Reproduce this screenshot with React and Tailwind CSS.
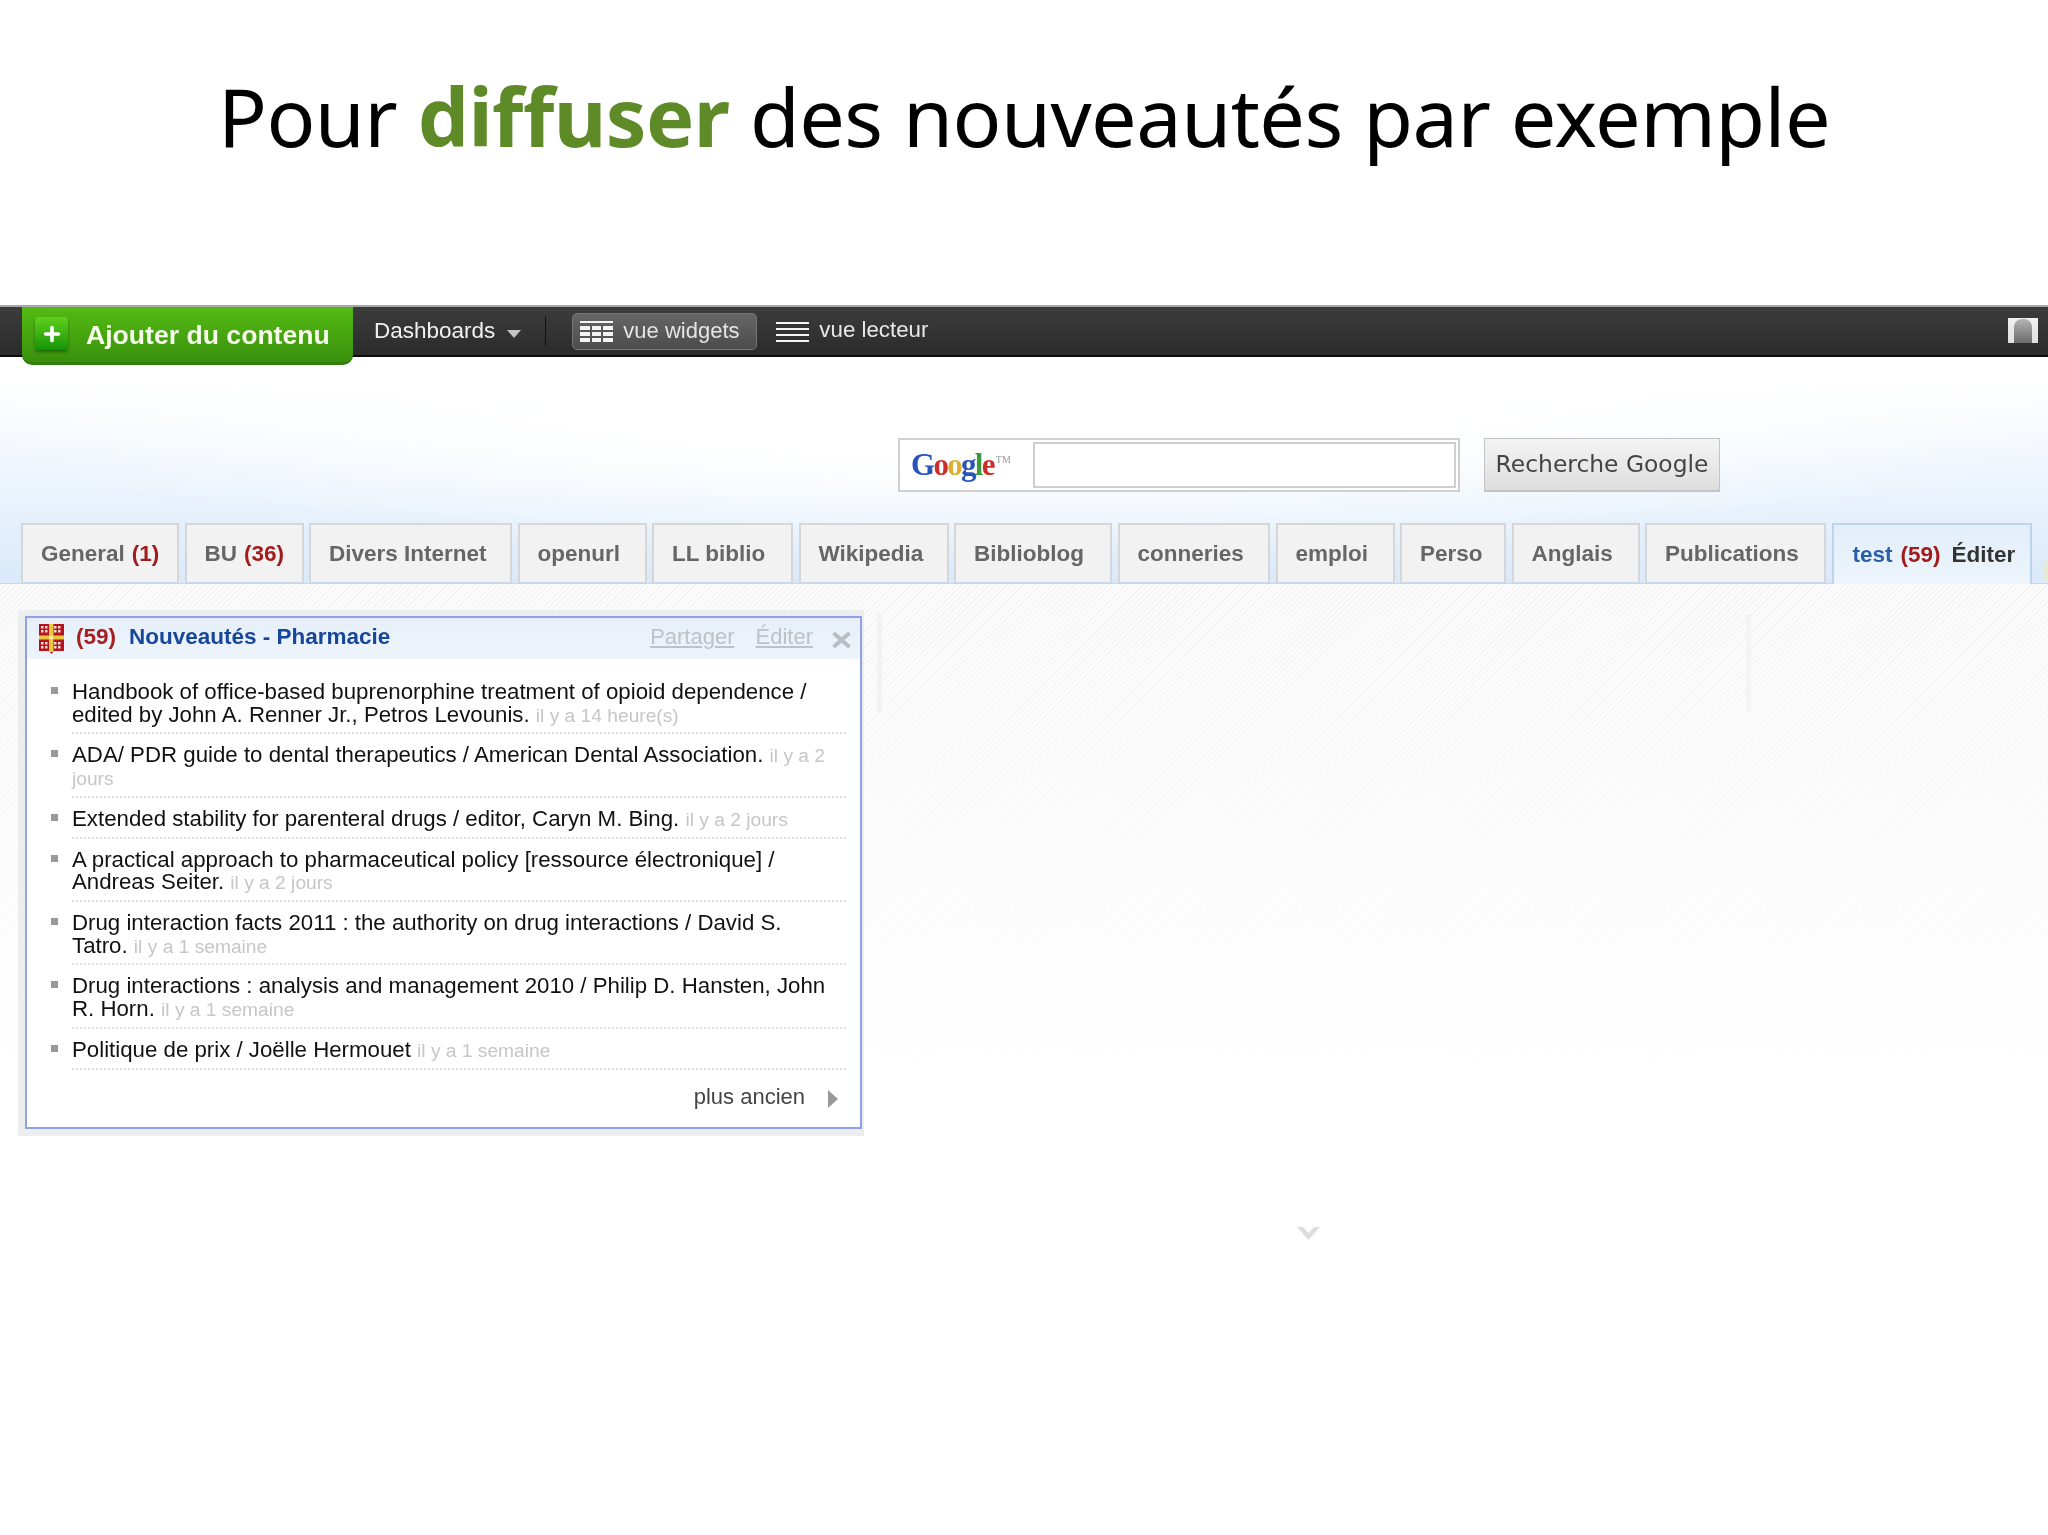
import { Plus } from 'lucide-react'

const sans = "font-['Liberation_Sans',Arial,sans-serif]"

const tabs = [
  { name: 'General', count: '(1)', w: 'w-[158px]' },
  { name: 'BU', count: '(36)', w: 'w-[119px]' },
  { name: 'Divers Internet', w: 'w-[203px]' },
  { name: 'openurl', w: 'w-[129px]' },
  { name: 'LL biblio', w: 'w-[141px]' },
  { name: 'Wikipedia', w: 'w-[150px]' },
  { name: 'Biblioblog', w: 'w-[158px]' },
  { name: 'conneries', w: 'w-[152.500px]' },
  { name: 'emploi', w: 'w-[119px]' },
  { name: 'Perso', w: 'w-[106px]' },
  { name: 'Anglais', w: 'w-[128px]' },
  { name: 'Publications', w: 'w-[181px]' },
]

const items = [
  { title: 'Handbook of office-based buprenorphine treatment of opioid dependence / edited by John A. Renner Jr., Petros Levounis.', time: 'il y a 14 heure(s)' },
  { title: 'ADA/ PDR guide to dental therapeutics / American Dental Association.', time: 'il y a 2 jours' },
  { title: 'Extended stability for parenteral drugs / editor, Caryn M. Bing.', time: 'il y a 2 jours' },
  { title: 'A practical approach to pharmaceutical policy [ressource électronique] / Andreas Seiter.', time: 'il y a 2 jours' },
  { title: 'Drug interaction facts 2011 : the authority on drug interactions / David S. Tatro.', time: 'il y a 1 semaine' },
  { title: 'Drug interactions : analysis and management 2010 / Philip D. Hansten, John R. Horn.', time: 'il y a 1 semaine' },
  { title: 'Politique de prix / Joëlle Hermouet', time: 'il y a 1 semaine' },
]

function WidgetsIcon() {
  return (
    <svg width="33" height="21" viewBox="0 0 33 21" fill="#f4f4f4">
      <rect x="0" y="0" width="33" height="2" />
      <rect x="0" y="5" width="10" height="4" />
      <rect x="12" y="5" width="9" height="4" />
      <rect x="23" y="5" width="10" height="4" />
      <rect x="0" y="11" width="10" height="4" />
      <rect x="12" y="11" width="9" height="4" />
      <rect x="23" y="11" width="10" height="4" />
      <rect x="0" y="17" width="10" height="4" />
      <rect x="12" y="17" width="9" height="4" />
      <rect x="23" y="17" width="10" height="4" />
    </svg>
  )
}

function ReaderIcon() {
  return (
    <svg width="33" height="21" viewBox="0 0 33 21" fill="#f4f4f4">
      <rect x="0" y="0" width="33" height="2" />
      <rect x="0" y="6" width="33" height="2" />
      <rect x="0" y="12" width="33" height="2" />
      <rect x="0" y="18" width="33" height="2" />
    </svg>
  )
}

function Crest() {
  const dots = []
  for (const [x, y] of [[2, 2], [15, 2], [2, 18], [15, 18]]) {
    for (const dx of [0, 4]) {
      for (const dy of [0, 4]) {
        dots.push(<rect key={`${x}-${y}-${dx}-${dy}`} x={x + dx} y={y + dy} width="2.500" height="2.500" fill="#f6dcd4" />)
      }
    }
  }
  return (
    <svg width="25" height="30" viewBox="0 0 25 30">
      <path d="M0 0H25V27H15L12.500 30L10 27H0Z" fill="#b5141c" />
      <rect x="10" y="0" width="4.500" height="28" fill="#e8c83c" />
      <rect x="0" y="11.500" width="25" height="4" fill="#e8c83c" />
      <rect x="10.500" y="12" width="3.500" height="3" fill="#f8eea8" />
      {dots}
    </svg>
  )
}

function Avatar() {
  return (
    <div className="w-[30px] h-[25px] bg-gradient-to-b from-[#f0f0f0] to-[#e0e0e0] flex justify-center items-end overflow-hidden">
      <div className="w-[18px] h-[24px] rounded-t-[8px] bg-gradient-to-b from-[#b4b4b4] to-[#6c6c6c]" />
    </div>
  )
}

function Google() {
  return (
    <span className="-mt-[2px] font-['Liberation_Serif',serif] text-[31px] leading-none tracking-[-1.700px] font-bold flex items-start">
      <span className="text-[#2a55b8]">G</span>
      <span className="text-[#c9302a]">o</span>
      <span className="text-[#dcb02c]">o</span>
      <span className="text-[#2a55b8]">g</span>
      <span className="text-[#3c9a3c]">l</span>
      <span className="text-[#c9302a]">e</span>
      <span className="text-[10px] text-[#999] font-normal tracking-normal mt-[6px] ml-[2px]">TM</span>
    </span>
  )
}

export default function App() {
  return (
    <div className={`w-full h-[1535px] bg-white overflow-hidden flex flex-col blur-[0.4px] ${sans}`}>
      <div className="h-[305px] shrink-0 pt-[66px] text-center text-black font-['Noto_Sans',sans-serif] text-[81px] leading-[100px] tracking-[-0.550px]">
        Pour <span className="font-bold text-[#5f8a28]">diffuser</span> des nouveautés par exemple
      </div>

      <div className="h-[52px] shrink-0 relative z-10 flex items-start bg-gradient-to-b from-[#3c3c3c] to-[#2b2b2b] border-t-[2px] border-t-[#a8a8a8] border-b-[2px] border-b-[#0c0c0c]">
        <div className="ml-[22px] w-[331px] h-[58px] shrink-0 rounded-b-[10px] bg-gradient-to-b from-[#54bb14] to-[#3a900c] border-b-[3px] border-b-[#2f7d0a] flex items-start pl-[13px] pt-[10px]">
          <div className="w-[33px] h-[33px] rounded-[3px] bg-gradient-to-b from-[#5ed01c] to-[#0d9406] shadow-[0_2px_3px_rgba(0,60,0,0.5)] flex items-center justify-center">
            <Plus size={22} strokeWidth={4} className="text-white" />
          </div>
          <span className="ml-[18px] mt-[3px] text-[26.600px] leading-[30px] font-bold text-[#f4fbe8] whitespace-nowrap">Ajouter du contenu</span>
        </div>
        <span className="ml-[21px] mt-[9px] text-[22.500px] leading-[30px] text-[#f0f0f0] whitespace-nowrap">Dashboards</span>
        <svg className="ml-[12px] mt-[23px]" width="14" height="8" viewBox="0 0 14 8" fill="#c4c4c4"><path d="M0 0H14L7 8Z" /></svg>
        <div className="ml-[24px] mt-[9px] w-[1px] h-[30px] bg-[#111]" />
        <div className="ml-[26px] mt-[6px] w-[185px] h-[37px] rounded-[5px] bg-gradient-to-b from-[#666] to-[#4c4c4c] border border-[#777] flex items-center pl-[7px]">
          <WidgetsIcon />
          <span className="ml-[10px] -mt-[2px] text-[22px] leading-[28px] text-[#e4e4e4] whitespace-nowrap">vue widgets</span>
        </div>
        <div className="ml-[19px] mt-[15px]"><ReaderIcon /></div>
        <span className="ml-[10px] mt-[9px] text-[22.300px] leading-[28px] text-[#e8e8e8] whitespace-nowrap">vue lecteur</span>
        <div className="ml-auto mr-[10px] mt-[11px]"><Avatar /></div>
      </div>

      <div className="h-[227px] shrink-0 flex flex-col justify-end bg-[radial-gradient(ellipse_55%_75%_at_50%_15%,#ffffff_40%,rgba(255,255,255,0)_100%),linear-gradient(to_bottom,#ffffff_10%,#d9e9fa_100%)]">
        <div className="flex ml-[898px] mb-[32px]">
          <div className="w-[562px] h-[54px] bg-white border-2 border-[#d0d0d0] flex items-center">
            <div className="w-[133px] pl-[11px] shrink-0"><Google /></div>
            <div className="flex-1 h-[46px] mr-[2px] bg-white border-2 border-[#cfcfcf]" />
          </div>
          <button className="ml-[24px] w-[236px] h-[54px] bg-gradient-to-b from-[#f4f4f4] to-[#dedede] border border-[#c4c4c4] border-b-2 text-[#444] font-['DejaVu_Sans',sans-serif] text-[23.400px] whitespace-nowrap">
            Recherche Google
          </button>
        </div>
        <div className="h-[60px] flex items-end gap-[5.500px] pl-[21px] border-b border-b-[#c6d8ec]">
          {tabs.map((t) => (
            <div key={t.name} className={`${t.w} h-[61px] -mb-[1px] shrink-0 bg-[#f2f2f2] border-2 border-[#d4d6d8] border-b-[#c6d8ec] flex items-center pl-[18px] text-[22.500px] font-bold text-[#666] whitespace-nowrap`}>
              {t.name}
              {t.count && <span className="ml-[7px] text-[#a31c1c]">{t.count}</span>}
            </div>
          ))}
          <div className="w-[200px] h-[61px] -mb-[1px] shrink-0 bg-gradient-to-b from-[#e2eefa] to-[#edf5fc] border-2 border-b-0 border-[#bcd4ec] flex items-center pl-[19px] text-[22.500px] font-bold whitespace-nowrap">
            <span className="text-[#2a5fa8]">test</span>
            <span className="ml-[8px] text-[#a31c1c]">(59)</span>
            <span className="ml-[11px] text-[#333]">Éditer</span>
          </div>
          <div className="ml-[7px] w-[3px] h-[20px] mb-[2px] bg-[#e6e8d8]" />
        </div>
      </div>

      <div className="flex-1 bg-[linear-gradient(to_bottom,#edf5fc_0px,rgba(237,245,252,0)_9px)]">
        <div className="h-full pt-[26px] flex items-start bg-[linear-gradient(to_bottom,rgba(255,255,255,0)_0%,#ffffff_55%),repeating-linear-gradient(135deg,#f2f2f2_0px,#f2f2f2_1px,#fbfbfb_1px,#fbfbfb_4px)]">
          <div className="ml-[18px] w-[846px] pl-[7px] pr-[2px] pt-[6px] pb-[7px] bg-[#eceeee] shrink-0">
            <section className="h-[513px] bg-white border-2 border-[#8f9fe8] flex flex-col">
              <header className="h-[41px] shrink-0 bg-gradient-to-b from-[#e6eff9] to-[#eef4fb] flex items-center pl-[12px] pr-[9px]">
                <Crest />
                <span className="ml-[12px] -mt-[3px] text-[22.500px] font-bold text-[#a52020]">(59)</span>
                <span className="ml-[13px] -mt-[3px] text-[22.500px] font-bold text-[#17479a] whitespace-nowrap">Nouveautés - Pharmacie</span>
                <a className="ml-auto -mt-[5px] text-[22px] text-[#bcc2c8] underline">Partager</a>
                <a className="ml-[21px] -mt-[5px] text-[22px] text-[#bcc2c8] underline">Éditer</a>
                <svg className="ml-[19px] mt-[3px]" width="19" height="16" viewBox="0 0 19 16" stroke="#b8bec4" strokeWidth="4" fill="none"><path d="M1.500 1L17.500 15M17.500 1L1.500 15" /></svg>
              </header>
              <ul className="mt-[12px] ml-[45px] mr-[14px] flex flex-col">
                {items.map((it) => (
                  <li key={it.title} className="relative pt-[10px] pb-[6.400px] pr-[16px] border-b-2 border-dotted border-b-[#dcdcdc] text-[22.250px] leading-[22.500px] text-[#111]">
                    <span className="absolute -left-[21px] top-[16px] w-[7px] h-[7px] bg-[#999]" />
                    {it.title} <span className="text-[19.200px] leading-none text-[#c6c6c6]">{it.time}</span>
                  </li>
                ))}
              </ul>
              <div className="mt-[14px] mr-[22px] flex items-center justify-end">
                <span className="text-[22px] leading-[26px] text-[#444]">plus ancien</span>
                <svg className="ml-[23px] mt-[4px]" width="10" height="18" viewBox="0 0 10 18" fill="#999"><path d="M0 0L10 9L0 18Z" /></svg>
              </div>
            </section>
          </div>
          <div className="flex-1 flex flex-col">
            <div className="flex mt-[4px]">
              <div className="ml-[13px] w-[5px] h-[98px] bg-[#f1f2f2]" />
              <div className="ml-[864px] w-[5px] h-[98px] bg-[#f4f4f4]" />
            </div>
            <svg className="ml-[433px] mt-[515px]" width="23" height="13" viewBox="0 0 23 13" fill="#dddddd"><path d="M0 0L6 0L11.500 6L17 0L23 0L11.500 13Z" /></svg>
          </div>
        </div>
      </div>
    </div>
  )
}
